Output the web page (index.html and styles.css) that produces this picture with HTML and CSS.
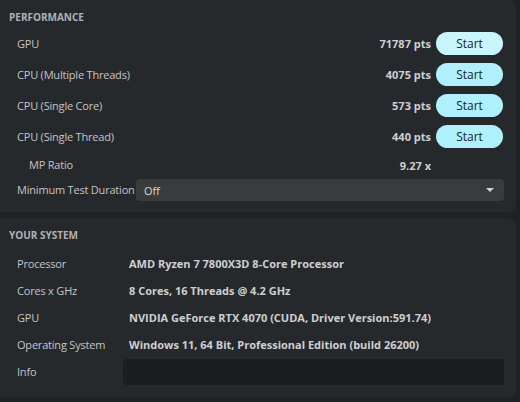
FILE: index.html
```html
<!DOCTYPE html>
<html lang="en">
<head>
  <meta charset="UTF-8">
  <title>Benchmark</title>
  <link rel="stylesheet" href="styles.css">
</head>
<body>

  <div class="panel perf">
    <div class="panel-title">PERFORMANCE</div>

    <div class="perf-grid">
      <div class="label">GPU</div>
      <div class="score">71787 pts</div>
      <button class="start first">Start</button>

      <div class="label">CPU (Multiple Threads)</div>
      <div class="score">4075 pts</div>
      <button class="start">Start</button>

      <div class="label">CPU (Single Core)</div>
      <div class="score">573 pts</div>
      <button class="start">Start</button>

      <div class="label">CPU (Single Thread)</div>
      <div class="score">440 pts</div>
      <button class="start">Start</button>

      <div class="label ratio">MP Ratio</div>
      <div class="score ratio-val">9.27 x</div>
      <div></div>
    </div>

    <div class="duration-row">
      <div class="label">Minimum Test Duration</div>
      <div class="select">
        <span>Off</span>
        <span class="arrow"></span>
      </div>
    </div>
  </div>

  <div class="panel system">
    <div class="panel-title">YOUR SYSTEM</div>

    <div class="sys-grid">
      <div class="label">Processor</div>
      <div class="value">AMD Ryzen 7 7800X3D 8-Core Processor</div>

      <div class="label">Cores x GHz</div>
      <div class="value">8 Cores, 16 Threads @ 4.2 GHz</div>

      <div class="label">GPU</div>
      <div class="value">NVIDIA GeForce RTX 4070 (CUDA, Driver Version:591.74)</div>

      <div class="label">Operating System</div>
      <div class="value">Windows 11, 64 Bit, Professional Edition (build 26200)</div>

      <div class="label info-label">Info</div>
      <div class="info-box"></div>
    </div>
  </div>

</body>
</html>
```

FILE: styles.css
```css
body, html {
  margin: 0;
  padding: 0;
}

body {
  background: #1f2123;
  font-family: "Open Sans", "Noto Sans", sans-serif;
  font-size: 11px;
  color: #c3c6c8;
  width: 520px;
  height: 402px;
  overflow: hidden;
}

.panel {
  width: 516px;
  background: #26292b;
  border-radius: 0 8px 8px 0;
  box-sizing: border-box;
}

.panel-title {
  padding: 10px 9px 0;
  line-height: 14px;
  font-size: 10px;
  font-weight: bold;
  color: #aeb2b5;
}

/* performance block */
.perf {
  height: 212px;
  padding-right: 13px;
}

.perf-grid {
  display: grid;
  grid-template-columns: 1fr auto 67px;
  grid-template-rows: 23px 23px 23px 23px 22px;
  column-gap: 5px;
  row-gap: 8px;
  align-items: center;
  margin-top: 8px;
}

.perf-grid .ratio {
  padding-left: 29px;
  margin-top: -4px;
}

.perf-grid .ratio-val {
  margin-top: -4px;
}

.label {
  padding-left: 17px;
  line-height: 16px;
  letter-spacing: -0.2px;
  white-space: nowrap;
}

.score {
  font-weight: bold;
  text-align: right;
  color: #cdd0d2;
}

.start {
  height: 23px;
  width: 67px;
  border: none;
  border-radius: 12px;
  background: #aef0fb;
  color: #1b2428;
  font-family: inherit;
  font-size: 12px;
  padding: 0;
  cursor: pointer;
}

.start.first {
  background: #c9f6fc;
}

.duration-row {
  display: flex;
  align-items: center;
  margin-top: 1px;
}

.duration-row .label {
  width: 119px;
  flex-shrink: 0;
}

.select {
  flex: 1;
  height: 22px;
  margin-right: -1px;
  background: #3a3b3c;
  border-radius: 4px;
  display: flex;
  align-items: center;
  justify-content: space-between;
  padding: 0 8px;
  color: #d6d8d9;
}

.arrow {
  width: 0;
  height: 0;
  border-left: 4px solid transparent;
  border-right: 4px solid transparent;
  border-top: 4px solid #d0d2d3;
  margin-right: 2px;
}

/* system block */
.system {
  margin-top: 6px;
  height: 179px;
  padding-right: 12px;
}

.sys-grid {
  display: grid;
  grid-template-columns: 123px 1fr;
  grid-template-rows: 27px 27px 27px 27px 26px;
  align-items: center;
  margin-top: 8px;
}

.sys-grid .info-label {
  margin-top: 2px;
}

.value {
  padding-left: 6px;
  font-weight: bold;
  color: #cdd0d2;
  white-space: nowrap;
}

.info-box {
  height: 26px;
  margin-top: 2px;
  background: #1c1d1e;
  border-radius: 4px;
}
```
